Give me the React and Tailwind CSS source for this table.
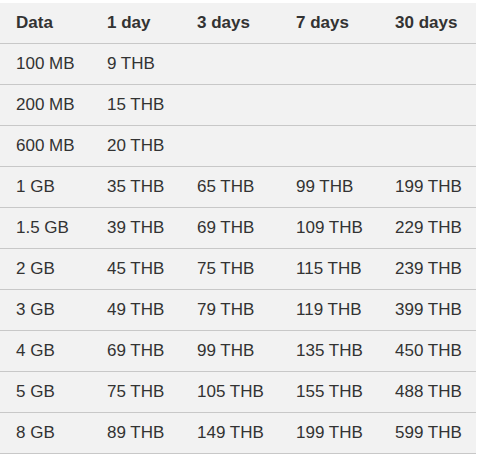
export default function App() {
  const header = ["Data", "1 day", "3 days", "7 days", "30 days"];
  const rows = [
    ["100 MB", "9 THB", "", "", ""],
    ["200 MB", "15 THB", "", "", ""],
    ["600 MB", "20 THB", "", "", ""],
    ["1 GB", "35 THB", "65 THB", "99 THB", "199 THB"],
    ["1.5 GB", "39 THB", "69 THB", "109 THB", "229 THB"],
    ["2 GB", "45 THB", "75 THB", "115 THB", "239 THB"],
    ["3 GB", "49 THB", "79 THB", "119 THB", "399 THB"],
    ["4 GB", "69 THB", "99 THB", "135 THB", "450 THB"],
    ["5 GB", "75 THB", "105 THB", "155 THB", "488 THB"],
    ["8 GB", "89 THB", "149 THB", "199 THB", "599 THB"],
  ];
  return (
    <div className="bg-white w-[478px] h-[456px] pt-[3px]" style={{ fontFamily: '"Liberation Sans", Arial, sans-serif' }}>
      <div className="w-[476px] bg-[#f2f2f2] text-[#333333] text-[17px]">
        <div className="grid grid-cols-[91px_90px_99px_99px_97px] h-[41px] items-center border-b border-[#c8c8c8] font-bold">
          {header.map((h, i) => (
            <div key={i} className="pl-4">{h}</div>
          ))}
        </div>
        {rows.map((r, ri) => (
          <div key={ri} className="grid grid-cols-[91px_90px_99px_99px_97px] h-[41px] items-center border-b border-[#c8c8c8]">
            {r.map((c, ci) => (
              <div key={ci} className="pl-4">{c}</div>
            ))}
          </div>
        ))}
      </div>
    </div>
  );
}
